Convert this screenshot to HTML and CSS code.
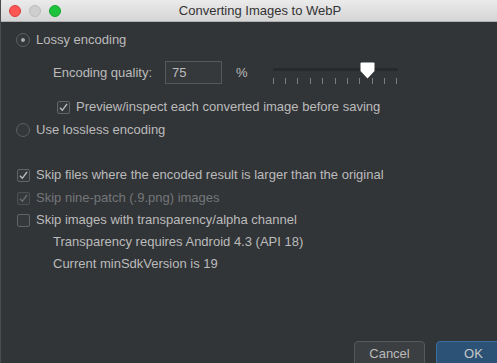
FILE: index.html
```html
<!DOCTYPE html>
<html>
<head>
<meta charset="utf-8">
<link rel="stylesheet" href="styles.css">
</head>
<body>
<div class="window">
  <div class="titlebar">
    <div class="lights">
      <span class="light red"></span>
      <span class="light gray"></span>
      <span class="light green"></span>
    </div>
    <div class="title">Converting Images to WebP</div>
  </div>
  <div class="content">
    <div class="row r1">
      <span class="radio on"></span>
      <span class="label">Lossy encoding</span>
    </div>
    <div class="row quality">
      <span class="label">Encoding quality:</span>
      <span class="input">75</span>
      <span class="label pct">%</span>
      <div class="slider">
        <div class="track"></div>
        <div class="ticks">
          <i></i><i></i><i></i><i></i><i></i><i></i><i></i><i></i><i></i><i></i><i></i>
        </div>
        <svg class="thumb" width="15" height="17" viewBox="0 0 15 17"><path d="M1.5 0.5 H13.5 Q14.5 0.5 14.5 1.5 V9 L7.5 16.5 L0.5 9 V1.5 Q0.5 0.5 1.5 0.5 Z" fill="#ffffff"/></svg>
      </div>
    </div>
    <div class="row preview">
      <span class="check on"><svg width="11" height="11" viewBox="0 0 11 11"><path d="M2 5.8 L4.3 8.3 L9 2" fill="none" stroke="#bdbdbd" stroke-width="1.3"/></svg></span>
      <span class="label">Preview/inspect each converted image before saving</span>
    </div>
    <div class="row r4">
      <span class="radio"></span>
      <span class="label">Use lossless encoding</span>
    </div>
    <div class="row r5">
      <span class="check on"><svg width="11" height="11" viewBox="0 0 11 11"><path d="M2 5.8 L4.3 8.3 L9 2" fill="none" stroke="#bdbdbd" stroke-width="1.3"/></svg></span>
      <span class="label">Skip files where the encoded result is larger than the original</span>
    </div>
    <div class="row r6 disabled">
      <span class="check on"><svg width="11" height="11" viewBox="0 0 11 11"><path d="M2 5.8 L4.3 8.3 L9 2" fill="none" stroke="#6c6e70" stroke-width="1.3"/></svg></span>
      <span class="label">Skip nine-patch (.9.png) images</span>
    </div>
    <div class="row r7">
      <span class="check"></span>
      <span class="label">Skip images with transparency/alpha channel</span>
    </div>
    <div class="row note">
      <span class="label">Transparency requires Android 4.3 (API 18)</span>
    </div>
    <div class="row note">
      <span class="label">Current minSdkVersion is 19</span>
    </div>
  </div>
  <div class="buttons">
    <span class="btn cancel">Cancel</span>
    <span class="btn ok">OK</span>
  </div>
</div>
</body>
</html>
```
FILE: styles.css
```css
html, body {
  margin: 0;
  padding: 0;
  background: #323538;
}
.window {
  width: 497px;
  height: 363px;
  overflow: hidden;
  background: #323538;
  border-left: 1px solid #4a4d50;
  box-sizing: border-box;
  font-family: "Liberation Sans", Arial, sans-serif;
  font-size: 13px;
  color: #bbbbbb;
  display: flex;
  flex-direction: column;
}
.titlebar {
  height: 21px;
  flex: none;
  background: linear-gradient(#ebebeb, #d5d5d5);
  border-bottom: 1px solid #b0b0b0;
  display: flex;
  align-items: center;
  position: relative;
}
.lights {
  display: flex;
  gap: 8px;
  padding-left: 8px;
}
.light {
  width: 12px;
  height: 12px;
  border-radius: 50%;
  box-sizing: border-box;
}
.light.red { background: #fc5753; border: 1px solid #df3d39; }
.light.gray { background: #cecece; border: 1px solid #bcbcbc; }
.light.green { background: #1ec33c; border: 1px solid #16a72f; }
.title {
  flex: 1;
  text-align: center;
  color: #333;
  font-size: 13px;
  margin-left: -58px;
  padding-left: 20px;
}
.content {
  display: flex;
  flex-direction: column;
  padding-left: 15px;
  padding-top: 7px;
  flex: 1;
}
.row {
  display: flex;
  align-items: center;
  height: 22px;
  white-space: nowrap;
}
.label { line-height: 16px; }
.radio {
  width: 14px;
  height: 14px;
  box-sizing: border-box;
  border-radius: 50%;
  border: 1px solid #5d6063;
  background: #35383b;
  margin-right: 6px;
  display: flex;
  align-items: center;
  justify-content: center;
}
.radio.on::after {
  content: "";
  width: 4px;
  height: 4px;
  border-radius: 50%;
  background: #a9a9a9;
}
.quality {
  height: 23px;
  margin-top: 10px;
  padding-left: 37px;
}
.input {
  width: 57px;
  height: 23px;
  box-sizing: border-box;
  border: 1px solid #56595c;
  background: #36393c;
  margin-left: 13px;
  padding-left: 6px;
  line-height: 21px;
}
.pct { margin-left: 14px; }
.slider {
  position: relative;
  margin-left: 25px;
  width: 125px;
  height: 23px;
  align-self: flex-start;
}
.track {
  position: absolute;
  left: 0;
  right: 0;
  top: 7px;
  height: 3px;
  background: #28292b;
  border-radius: 2px;
}
.ticks {
  position: absolute;
  left: 0;
  right: 0;
  top: 17px;
  height: 6px;
  display: flex;
  justify-content: space-between;
}
.ticks i {
  width: 1px;
  height: 6px;
  background: #7b7e81;
}
.thumb {
  position: absolute;
  left: 87px;
  top: 1px;
}
.check {
  width: 13px;
  height: 13px;
  box-sizing: border-box;
  border: 1px solid #616466;
  border-radius: 2px;
  background: #36393b;
  margin-right: 6px;
  display: flex;
  align-items: center;
  justify-content: center;
}
.preview {
  margin-top: 12px;
  padding-left: 41px;
}
.r4 { margin-top: 1px; }
.r5 { margin-top: 23px; padding-left: 1px; }
.r6 { margin-top: 1px; padding-left: 1px; }
.r6 .check { border-color: #4c4f52; }
.disabled { color: #747679; }
.r7 { padding-left: 1px; }
.note { padding-left: 37px; }
.buttons {
  flex: none;
  display: flex;
  justify-content: flex-end;
  gap: 11px;
  margin-right: -14px;
  height: 22px;
}
.btn {
  height: 26px;
  box-sizing: border-box;
  border-radius: 4px;
  text-align: center;
  line-height: 24px;
}
.cancel {
  width: 71px;
  background: #3c3f42;
  border: 1px solid #56595c;
  color: #bbbbbb;
}
.ok {
  width: 75px;
  background: #2c5275;
  border: 1px solid #3d6d9e;
  color: #c8c8c8;
}
```
